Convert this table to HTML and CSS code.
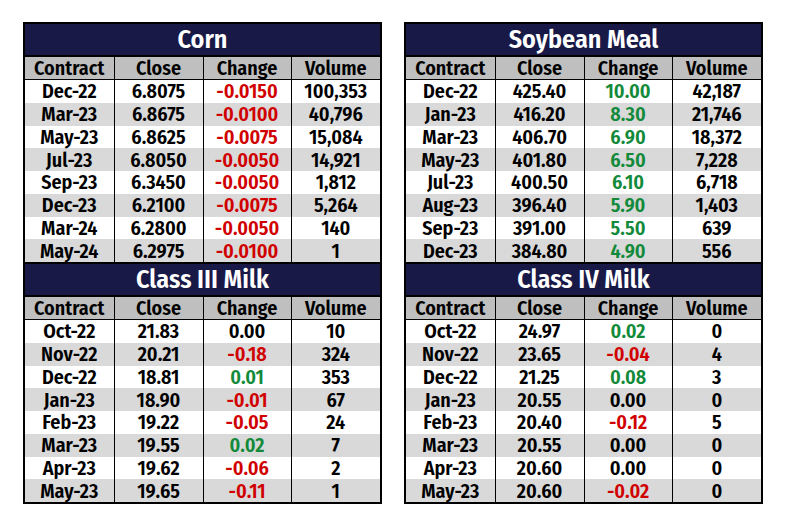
FILE: index.html
```html
<!DOCTYPE html>
<html>
<head>
<meta charset="utf-8">
<link rel="stylesheet" href="styles.css">
</head>
<body>
<div class="page">
  <table class="quotes">
    <colgroup><col class="c1"><col class="c2"><col class="c3"><col class="c4"></colgroup>
    <tr class="title"><th colspan="4">Corn</th></tr>
    <tr class="head"><th>Contract</th><th>Close</th><th>Change</th><th>Volume</th></tr>
    <tr><td>Dec-22</td><td>6.8075</td><td class="neg">-0.0150</td><td>100,353</td></tr>
    <tr class="alt"><td>Mar-23</td><td>6.8675</td><td class="neg">-0.0100</td><td>40,796</td></tr>
    <tr><td>May-23</td><td>6.8625</td><td class="neg">-0.0075</td><td>15,084</td></tr>
    <tr class="alt"><td>Jul-23</td><td>6.8050</td><td class="neg">-0.0050</td><td>14,921</td></tr>
    <tr><td>Sep-23</td><td>6.3450</td><td class="neg">-0.0050</td><td>1,812</td></tr>
    <tr class="alt"><td>Dec-23</td><td>6.2100</td><td class="neg">-0.0075</td><td>5,264</td></tr>
    <tr><td>Mar-24</td><td>6.2800</td><td class="neg">-0.0050</td><td>140</td></tr>
    <tr class="alt last"><td>May-24</td><td>6.2975</td><td class="neg">-0.0100</td><td>1</td></tr>
    <tr class="title"><th colspan="4">Class III Milk</th></tr>
    <tr class="head"><th>Contract</th><th>Close</th><th>Change</th><th>Volume</th></tr>
    <tr><td>Oct-22</td><td>21.83</td><td>0.00</td><td>10</td></tr>
    <tr class="alt"><td>Nov-22</td><td>20.21</td><td class="neg">-0.18</td><td>324</td></tr>
    <tr><td>Dec-22</td><td>18.81</td><td class="pos">0.01</td><td>353</td></tr>
    <tr class="alt"><td>Jan-23</td><td>18.90</td><td class="neg">-0.01</td><td>67</td></tr>
    <tr><td>Feb-23</td><td>19.22</td><td class="neg">-0.05</td><td>24</td></tr>
    <tr class="alt"><td>Mar-23</td><td>19.55</td><td class="pos">0.02</td><td>7</td></tr>
    <tr><td>Apr-23</td><td>19.62</td><td class="neg">-0.06</td><td>2</td></tr>
    <tr class="alt"><td>May-23</td><td>19.65</td><td class="neg">-0.11</td><td>1</td></tr>
  </table>
  <table class="quotes">
    <colgroup><col class="c1"><col class="c2"><col class="c3"><col class="c4"></colgroup>
    <tr class="title"><th colspan="4">Soybean Meal</th></tr>
    <tr class="head"><th>Contract</th><th>Close</th><th>Change</th><th>Volume</th></tr>
    <tr><td>Dec-22</td><td>425.40</td><td class="pos">10.00</td><td>42,187</td></tr>
    <tr class="alt"><td>Jan-23</td><td>416.20</td><td class="pos">8.30</td><td>21,746</td></tr>
    <tr><td>Mar-23</td><td>406.70</td><td class="pos">6.90</td><td>18,372</td></tr>
    <tr class="alt"><td>May-23</td><td>401.80</td><td class="pos">6.50</td><td>7,228</td></tr>
    <tr><td>Jul-23</td><td>400.50</td><td class="pos">6.10</td><td>6,718</td></tr>
    <tr class="alt"><td>Aug-23</td><td>396.40</td><td class="pos">5.90</td><td>1,403</td></tr>
    <tr><td>Sep-23</td><td>391.00</td><td class="pos">5.50</td><td>639</td></tr>
    <tr class="alt last"><td>Dec-23</td><td>384.80</td><td class="pos">4.90</td><td>556</td></tr>
    <tr class="title"><th colspan="4">Class IV Milk</th></tr>
    <tr class="head"><th>Contract</th><th>Close</th><th>Change</th><th>Volume</th></tr>
    <tr><td>Oct-22</td><td>24.97</td><td class="pos">0.02</td><td>0</td></tr>
    <tr class="alt"><td>Nov-22</td><td>23.65</td><td class="neg">-0.04</td><td>4</td></tr>
    <tr><td>Dec-22</td><td>21.25</td><td class="pos">0.08</td><td>3</td></tr>
    <tr class="alt"><td>Jan-23</td><td>20.55</td><td>0.00</td><td>0</td></tr>
    <tr><td>Feb-23</td><td>20.40</td><td class="neg">-0.12</td><td>5</td></tr>
    <tr class="alt"><td>Mar-23</td><td>20.55</td><td>0.00</td><td>0</td></tr>
    <tr><td>Apr-23</td><td>20.60</td><td>0.00</td><td>0</td></tr>
    <tr class="alt"><td>May-23</td><td>20.60</td><td class="neg">-0.02</td><td>0</td></tr>
  </table>
</div>
</body>
</html>
```

FILE: styles.css
```css
html, body {
  margin: 0;
  padding: 0;
  background: #ffffff;
}

.page {
  display: flex;
  gap: 22px;
  padding: 22px 0 0 23px;
  font-family: "Fira Sans Condensed", "Roboto Condensed", "DejaVu Sans Condensed", sans-serif;
  font-weight: 600;
  color: #000000;
}

.quotes {
  border-collapse: collapse;
  table-layout: fixed;
  width: 357px;
  border: 2px solid #000000;
}

.c1 { width: 90px; }
.c2 { width: 89px; }
.c3 { width: 88px; }
.c4 { width: 90px; }

.quotes td,
.quotes th {
  padding: 0;
  text-align: center;
  font-size: 20px;
  font-weight: 600;
  line-height: 20px;
  height: 22.75px;
  border-left: 1px solid #000000;
  border-right: 1px solid #000000;
  white-space: nowrap;
}

.title th {
  background: #191947;
  color: #ffffff;
  font-size: 26px;
  font-weight: 600;
  height: 31px;
  border-top: 2px solid #000000;
  border-bottom: 2px solid #000000;
}

.head th {
  background: #bfbfbf;
  height: 22px;
  border-bottom: 1px solid #000000;
}

.alt td {
  background: #d9d9d9;
}

.neg { color: #d10000; }
.pos { color: #128a3a; }
```
